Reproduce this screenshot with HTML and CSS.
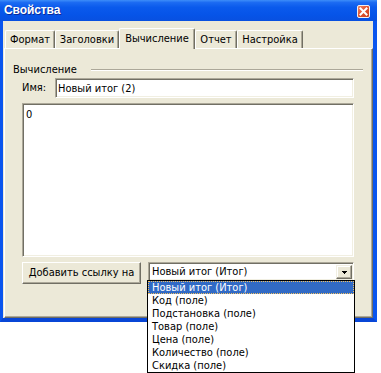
FILE: index.html
```html
<!DOCTYPE html>
<html lang="ru">
<head>
<meta charset="utf-8">
<title>Свойства</title>
<link rel="stylesheet" href="styles.css">
</head>
<body>
<div class="window">
  <div class="titlebar">
    <span class="title">Свойства</span>
    <span class="close">
      <svg width="13" height="13" viewBox="0 0 13 13">
        <defs>
          <linearGradient id="cg" x1="0" y1="0" x2="1" y2="1">
            <stop offset="0" stop-color="#F08A6A"/>
            <stop offset="0.5" stop-color="#E0512D"/>
            <stop offset="1" stop-color="#C8401C"/>
          </linearGradient>
        </defs>
        <rect x="0.5" y="0.5" width="12" height="12" rx="1.5" fill="url(#cg)" stroke="#F4F0F0"/>
        <path d="M3.5 3.5 L9.5 9.5 M9.5 3.5 L3.5 9.5" stroke="#fff" stroke-width="2" stroke-linecap="square"/>
      </svg>
    </span>
  </div>
  <div class="frame">
    <div class="tabs">
      <div class="tab w-format">Формат</div>
      <div class="tab w-headers">Заголовки</div>
      <div class="tab tab-active w-calc">Вычисление</div>
      <div class="tab w-report">Отчет</div>
      <div class="tab w-settings">Настройка</div>
    </div>
    <div class="panel">
      <div class="group-head">
        <span class="group-label">Вычисление</span>
        <span class="group-line"></span>
      </div>
      <div class="content">
        <div class="name-row">
          <span class="name-label">Имя:</span>
          <div class="input">Новый итог (2)</div>
        </div>
        <div class="textarea">0</div>
        <div class="action-row">
          <div class="button">Добавить ссылку на</div>
          <div class="select">
            <span class="select-text">Новый итог (Итог)</span>
            <span class="select-arrow">
              <svg width="5" height="3" viewBox="0 0 5 3" shape-rendering="crispEdges">
                <rect x="0" y="0" width="5" height="1" fill="#000"/>
                <rect x="1" y="1" width="3" height="1" fill="#000"/>
                <rect x="2" y="2" width="1" height="1" fill="#000"/>
              </svg>
            </span>
          </div>
        </div>
      </div>
    </div>
  </div>
  <ul class="dropdown">
    <li class="item item-selected">Новый итог (Итог)</li>
    <li class="item">Код (поле)</li>
    <li class="item">Подстановка (поле)</li>
    <li class="item">Товар (поле)</li>
    <li class="item">Цена (поле)</li>
    <li class="item">Количество (поле)</li>
    <li class="item">Скидка (поле)</li>
  </ul>
</div>
</body>
</html>
```
FILE: styles.css
```css
* { box-sizing: border-box; }

html, body {
  min-height: 373px;
}

body {
  margin: 0;
  background: #fff;
  font-family: "DejaVu Sans Condensed", "DejaVu Sans", sans-serif;
  font-stretch: condensed;
  font-size: 11px;
  line-height: 13px;
  color: #000;
}

.window {
  position: relative;
  width: 377px;
}

.titlebar {
  height: 21px;
  display: flex;
  align-items: center;
  justify-content: space-between;
  padding: 0 7px 0 4px;
  background: linear-gradient(to bottom, #3D8DF9 0%, #1C6BF2 12%, #0A5AEC 35%, #0654E8 70%, #0850E0 100%);
}

.title {
  color: #fff;
  font-family: "Liberation Sans", Arial, sans-serif;
  font-stretch: normal;
  font-weight: bold;
  font-size: 12px;
  letter-spacing: -0.1px;
  text-shadow: 1px 1px 0 #0B2B9A;
}

.close {
  display: flex;
  width: 13px;
  height: 13px;
  margin-top: 1px;
}

.frame {
  height: 301px;
  background: #ECE9D8;
  border-left: 3px solid #0A55EE;
  border-right: 4px solid #0A55EE;
  border-bottom: 4px solid #0846D6;
  padding: 7px 0 0 1px;
  display: flex;
  flex-direction: column;
}

.tabs {
  display: flex;
  align-items: flex-end;
  height: 20px;
  padding-left: 1px;
  position: relative;
  z-index: 2;
}

.tab {
  height: 18px;
  display: flex;
  align-items: center;
  justify-content: center;
  background: #ECE9D8;
  border-top: 1px solid #fff;
  border-left: 1px solid #fff;
  border-right: 1px solid #716F64;
  box-shadow: inset -1px 0 0 #ACA899;
  border-radius: 2px 2px 0 0;
}

.tab-active {
  height: 21px;
  margin-bottom: -1px;
  padding-bottom: 2px;
}

.w-format { width: 50px; }
.w-headers { width: 64px; }
.w-calc { width: 76px; }
.w-report { width: 42px; }
.w-settings { width: 66px; }

.panel {
  flex: 1;
  border-top: 1px solid #fff;
  border-left: 1px solid #fff;
  border-right: 1px solid #716F64;
  border-bottom: 1px solid #716F64;
  box-shadow: inset -1px -1px 0 #ACA899;
  padding: 14px 9px 0 8px;
}

.group-head {
  display: flex;
  align-items: center;
  height: 13px;
}

.group-line {
  flex: 1;
  margin-left: 14px;
  margin-top: 1px;
  border-top: 1px solid #ACA899;
  border-bottom: 1px solid #fff;
}

.content {
  margin-left: 9px;
  width: 332px;
  display: flex;
  flex-direction: column;
}

.name-row {
  display: flex;
  align-items: center;
  margin-top: 2px;
  height: 20px;
}

.name-label {
  width: 33px;
  margin-top: -2px;
}

.input,
.textarea,
.select {
  background: #fff;
  border-top: 1px solid #ACA899;
  border-left: 1px solid #ACA899;
  border-right: 1px solid #fff;
  border-bottom: 1px solid #fff;
  box-shadow: inset 1px 1px 0 #716F64, inset -1px -1px 0 #F1EFE2;
}

.input {
  width: 299px;
  height: 20px;
  padding: 3px 0 0 2px;
}

.textarea {
  margin-top: 5px;
  height: 154px;
  padding: 4px 0 0 3px;
}

.action-row {
  display: flex;
  align-items: flex-start;
  margin-top: 5px;
}

.button {
  width: 119px;
  height: 22px;
  display: flex;
  align-items: center;
  justify-content: center;
  padding-bottom: 1px;
  border-top: 1px solid #fff;
  border-left: 1px solid #fff;
  border-right: 1px solid #716F64;
  border-bottom: 1px solid #716F64;
  box-shadow: inset -1px -1px 0 #ACA899;
}

.select {
  margin-left: 7px;
  width: 206px;
  height: 19px;
  display: flex;
  align-items: center;
  justify-content: space-between;
  padding: 1px 1px 1px 3px;
}

.select-arrow {
  width: 16px;
  height: 14px;
  margin-top: 1px;
  display: flex;
  align-items: center;
  justify-content: center;
  background: #ECE9D8;
  border-top: 1px solid #F1EFE2;
  border-left: 1px solid #F1EFE2;
  border-right: 1px solid #716F64;
  border-bottom: 1px solid #716F64;
  box-shadow: inset -1px -1px 0 #ACA899, inset 1px 1px 0 #fff;
}

.select-arrow svg { margin-top: 1px; }

.dropdown {
  position: absolute;
  left: 147px;
  top: 280px;
  width: 208px;
  height: 93px;
  margin: 0;
  padding: 0;
  list-style: none;
  background: #fff;
  border: 1px solid #000;
  z-index: 5;
}

.item {
  height: 13px;
  padding-left: 4px;
  white-space: nowrap;
}

.item-selected {
  background: #316AC5;
  color: #fff;
  outline: 1px dotted #F2C060;
  outline-offset: -1px;
}
```
